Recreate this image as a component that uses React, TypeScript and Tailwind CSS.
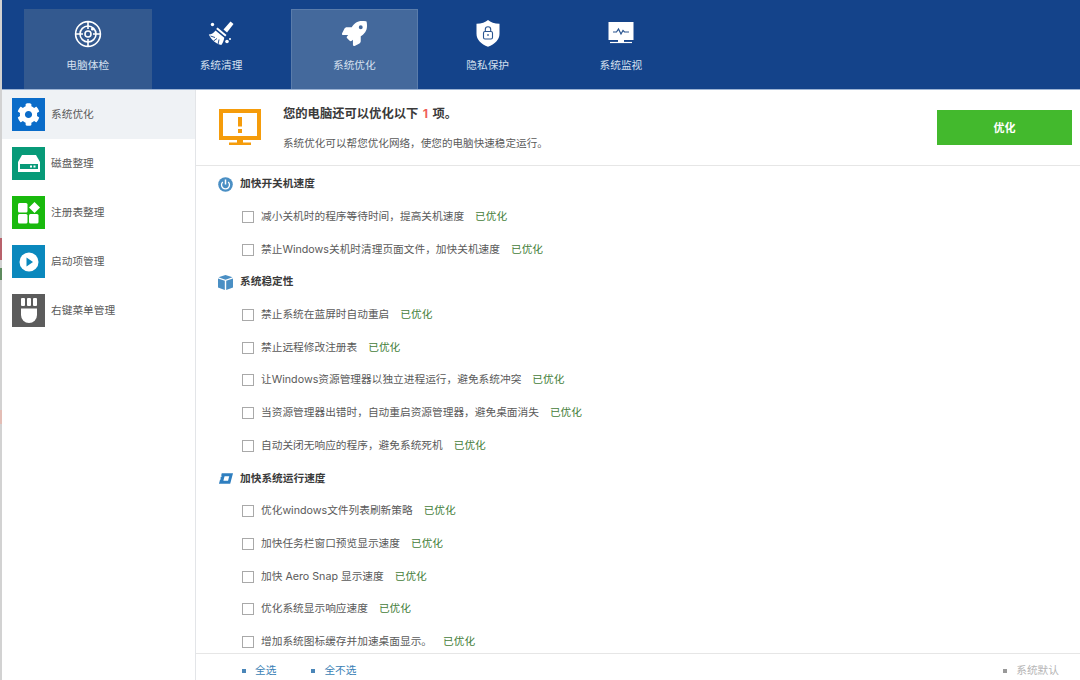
import { FaCog, FaRocket } from 'react-icons/fa'

const font = "font-['Inter','Noto_Sans_CJK_SC',sans-serif]"

function RadarIcon() {
  return (
    <svg width="28" height="28" viewBox="0 0 28 28" fill="none" stroke="#fff" strokeWidth="1.6">
      <circle cx="14" cy="14" r="12.4" />
      <circle cx="14" cy="14" r="8" />
      <circle cx="14" cy="14" r="3" />
      <path d="M14 2v7M14 19v7M2 14h7M19 14h7" />
      <circle cx="18.5" cy="9" r="1.6" fill="#fff" stroke="none" />
    </svg>
  )
}

function BroomIcon() {
  return (
    <svg width="26" height="26" viewBox="0 0 26 26">
      <path d="M15.500 8.500L22.500.5l3 2.500-6.500 8.500z" fill="#fff" />
      <path d="M9.500 6.500l9 7.500-1.300 1.600-9-7.500z" fill="#fff" />
      <path d="M7.500 9.500l8.800 7.300c-.5 3-1.500 5.300-3 7.200-2.500-.4-4.500-1.500-6.500-3-2-1.500-4-3.500-6-7.500 2.500 0 4.800-1.500 6.700-4z" fill="#fff" />
      <path d="M2.500 15l4.500 1.500M5.500 20l3.500-2.500M10 23.500l1-5" stroke="#14438a" strokeWidth="0.900" fill="none" />
      <circle cx="4.500" cy="3.500" r="1.700" fill="#fff" />
      <circle cx="19" cy="20.500" r="1.800" fill="#fff" />
      <circle cx="22" cy="18" r="1" fill="#fff" />
    </svg>
  )
}

function ShieldIcon() {
  return (
    <svg width="24" height="27" viewBox="0 0 24 27">
      <path d="M12 0c2.500 2.200 6.500 3.600 11.500 3.800v10c0 6-4.600 10.400-11.500 13C5.100 24.200.5 19.800.5 13.800v-10C5.500 3.600 9.500 2.200 12 0z" fill="#fff" />
      <rect x="7.500" y="11.500" width="9" height="7.500" rx="1.500" fill="none" stroke="#2a5590" strokeWidth="1.100" />
      <path d="M9.300 11.500V9.500a2.700 2.700 0 0 1 5.400 0v2" fill="none" stroke="#2a5590" strokeWidth="1.100" />
      <path d="M12 14v2" stroke="#2a5590" strokeWidth="1.200" />
    </svg>
  )
}

function MonitorIcon() {
  return (
    <svg width="26" height="23" viewBox="0 0 26 23">
      <rect x="0.500" y="0" width="25" height="18" fill="#fff" />
      <path d="M5 10h3.500l2-3 2.500 5 2-3.500 1.500 1.500H21" fill="none" stroke="#2a5590" strokeWidth="1.200" />
      <path d="M2 20.500h22" stroke="#fff" strokeWidth="1.200" />
      <rect x="10" y="18" width="6" height="2" fill="#fff" />
    </svg>
  )
}

function AlertMonitor() {
  return (
    <svg width="42" height="37" viewBox="0 0 42 37">
      <rect x="2" y="2" width="38" height="27" fill="#fff" stroke="#f59c0b" strokeWidth="4" />
      <rect x="19" y="8" width="4" height="9.500" fill="#f59c0b" />
      <rect x="19" y="20" width="4" height="4" fill="#f59c0b" />
      <rect x="18" y="30" width="6" height="4" fill="#f59c0b" />
      <rect x="10" y="33.500" width="22" height="2.500" fill="#f59c0b" />
    </svg>
  )
}

function DiskIcon() {
  return (
    <svg width="22" height="17" viewBox="0 0 22 17">
      <path d="M4 0h14l4 7v10H0V7z" fill="#fff" />
      <rect x="2" y="9" width="18" height="5" fill="#079a78" />
      <rect x="12" y="10.500" width="2" height="2" fill="#fff" />
      <rect x="15.500" y="10.500" width="2" height="2" fill="#fff" />
    </svg>
  )
}

function BlocksIcon() {
  return (
    <svg width="22" height="22" viewBox="0 0 22 22" fill="#fff">
      <rect x="0" y="1" width="9.500" height="9.500" rx="1.500" />
      <rect x="0" y="12" width="9.500" height="9.500" rx="1.500" />
      <rect x="11" y="12" width="9.500" height="9.500" rx="1.500" />
      <path d="M16.500 0l5.500 5.500-5.500 5.500-5.500-5.500z" />
    </svg>
  )
}

function PlayIcon() {
  return (
    <svg width="20" height="20" viewBox="0 0 20 20">
      <circle cx="10" cy="10" r="9.500" fill="#fff" />
      <path d="M7.500 5.500l6.500 4.500-6.500 4.500z" fill="#0a88bd" />
    </svg>
  )
}

function MouseIcon() {
  return (
    <svg width="16" height="25" viewBox="0 0 16 25" fill="#fff">
      <rect x="0" y="0" width="4" height="8" rx="1" />
      <rect x="6" y="0" width="4" height="8" rx="1" />
      <rect x="12" y="0" width="4" height="8" rx="1" />
      <path d="M0 10.500h16V17a8 8 0 0 1-16 0z" />
    </svg>
  )
}

function PowerIcon() {
  return (
    <svg width="15" height="15" viewBox="0 0 15 15">
      <circle cx="7.500" cy="7.500" r="7.300" fill="#4a8fc4" />
      <path d="M4.800 5a4 4 0 1 0 5.400 0" fill="none" stroke="#fff" strokeWidth="1.300" />
      <path d="M7.500 2.500v5" stroke="#fff" strokeWidth="1.500" />
    </svg>
  )
}

function BoxIcon() {
  return (
    <svg width="15" height="15" viewBox="0 0 15 15" fill="#4a8fc4">
      <path d="M7.500 0l7 2.300-7 2.400-7-2.400z" />
      <path d="M0 3.500l6.800 2.300V15L0 12.400z" />
      <path d="M15 3.500L8.200 5.800V15l6.800-2.600z" />
    </svg>
  )
}

function SpeedIcon() {
  return (
    <svg width="16" height="11" viewBox="0 0 16 11">
      <path d="M4 0h12l-3 11H1z" fill="#2f7fc0" />
      <path d="M7 3h5l-1.300 5h-5z" fill="#fff" />
      <path d="M0 3h4M0 6h3" stroke="#fff" strokeWidth="1" />
    </svg>
  )
}

const tabs = [
  { label: '电脑体检', icon: <RadarIcon />, cls: 'bg-[#33598f] border-transparent' },
  { label: '系统清理', icon: <BroomIcon />, cls: 'border-transparent' },
  { label: '系统优化', icon: <FaRocket size={25} color="#fff" />, cls: 'bg-[#44699c] border-[#5a7cab]' },
  { label: '隐私保护', icon: <ShieldIcon />, cls: 'border-transparent' },
  { label: '系统监视', icon: <MonitorIcon />, cls: 'border-transparent' },
]

const sideItems = [
  { label: '系统优化', bg: 'bg-[#0a6cc9]', icon: <FaCog size={23} color="#fff" />, active: true },
  { label: '磁盘整理', bg: 'bg-[#079a78]', icon: <DiskIcon /> },
  { label: '注册表整理', bg: 'bg-[#19b90d]', icon: <BlocksIcon /> },
  { label: '启动项管理', bg: 'bg-[#0a88bd]', icon: <PlayIcon /> },
  { label: '右键菜单管理', bg: 'bg-[#5c5c5c]', icon: <MouseIcon /> },
]

const groups = [
  {
    title: '加快开关机速度',
    icon: <PowerIcon />,
    items: ['减小关机时的程序等待时间，提高关机速度', '禁止Windows关机时清理页面文件，加快关机速度'],
  },
  {
    title: '系统稳定性',
    icon: <BoxIcon />,
    items: [
      '禁止系统在蓝屏时自动重启',
      '禁止远程修改注册表',
      '让Windows资源管理器以独立进程运行，避免系统冲突',
      '当资源管理器出错时，自动重启资源管理器，避免桌面消失',
      '自动关闭无响应的程序，避免系统死机',
    ],
  },
  {
    title: '加快系统运行速度',
    icon: <SpeedIcon />,
    items: [
      '优化windows文件列表刷新策略',
      '加快任务栏窗口预览显示速度',
      '加快 Aero Snap 显示速度',
      '优化系统显示响应速度',
      '增加系统图标缓存并加速桌面显示。',
    ],
  },
]

export default function App() {
  return (
    <div className={`${font} w-[1080px] h-[680px] overflow-hidden flex bg-white text-[10.7px] text-[#5a5a5a]`}>
      {/* sliver of the desktop behind the window */}
      <div className="w-[2px] shrink-0 flex flex-col bg-[#d2d2d2]">
        <div className="h-[238px] shrink-0" />
        <div className="h-[22px] shrink-0 bg-[#b8616b]" />
        <div className="h-[8px] shrink-0" />
        <div className="h-[12px] shrink-0 bg-[#5e8a5e]" />
        <div className="h-[130px] shrink-0" />
        <div className="h-[14px] shrink-0 bg-[#e3bdb5]" />
      </div>

      <div className="flex-1 min-w-0 flex flex-col">
        {/* Top nav */}
        <div className="h-[90px] shrink-0 bg-[#14438a] border-b border-[#9db4d4] flex items-end pl-[22px] gap-[5.8px]">
          {tabs.map((t) => (
            <div key={t.label} className={`w-[127.5px] h-[80px] border border-b-0 flex flex-col items-center text-[#d5e0ef] ${t.cls}`}>
              <div className="h-[29px] mt-[9px] flex items-center justify-center">{t.icon}</div>
              <div className="mt-[11px] leading-[14px]">{t.label}</div>
            </div>
          ))}
        </div>

        <div className="flex-1 flex min-h-0 bg-white">
          {/* Sidebar */}
          <div className="w-[194px] shrink-0 border-r border-[#e3e5e8] flex flex-col">
            {sideItems.map((s) => (
              <div key={s.label} className={`h-[49px] flex items-center pl-[10px] gap-[6px] ${s.active ? 'bg-[#eff2f5]' : ''}`}>
                <div className={`w-[33px] h-[33px] flex items-center justify-center ${s.bg}`}>{s.icon}</div>
                <span className="pt-[2px]">{s.label}</span>
              </div>
            ))}
          </div>

          {/* Main */}
          <div className="flex-1 flex flex-col min-w-0">
            <div className="h-[76px] shrink-0 border-b border-[#e6e6e6] flex items-center pl-[23px] pr-[8px]">
              <AlertMonitor />
              <div className="ml-[22px] flex-1 flex flex-col gap-[15px] mt-[2px]">
                <div className="text-[12.3px] leading-[16px] font-bold text-[#3a3a3a]">
                  您的电脑还可以优化以下 <span className="mx-[1.5px] text-[#f0605a]">1</span> 项。
                </div>
                <div className="text-[10.6px] leading-[14px]">系统优化可以帮您优化网络，使您的电脑快速稳定运行。</div>
              </div>
              <button className="w-[135px] h-[35px] -mt-[1px] pt-[2px] bg-[#43b92d] text-white font-bold text-[11px]">优化</button>
            </div>

            <div className="flex-1 min-h-0 overflow-hidden pt-[2px]">
              {groups.map((g) => (
                <div key={g.title}>
                  <div className="h-[32.7px] flex items-center pl-[22px]">
                    <div className="w-[15px] flex justify-center">{g.icon}</div>
                    <span className="ml-[7px] font-bold text-[#3a3a3a]">{g.title}</span>
                  </div>
                  {g.items.map((item) => (
                    <div key={item} className="h-[32.7px] flex items-center pl-[46px]">
                      <span className="w-[12px] h-[12px] border border-[#a9a9a9] bg-white" />
                      <span className="ml-[7px]">{item}</span>
                      <span className="ml-[11px] text-[#44803a]">已优化</span>
                    </div>
                  ))}
                </div>
              ))}
            </div>

            <div className="h-[27px] shrink-0 border-t border-[#e6e6e6] flex items-center pl-[46px] pr-[21px] pt-[8px] text-[#3a7fb5]">
              <span className="w-[4px] h-[4px] bg-[#4a86b8]" />
              <span className="ml-[9px]">全选</span>
              <span className="ml-[35px] w-[4px] h-[4px] bg-[#4a86b8]" />
              <span className="ml-[9px]">全不选</span>
              <span className="ml-auto w-[4px] h-[4px] bg-[#999]" />
              <span className="ml-[9px] text-[#b5b5b5]">系统默认</span>
            </div>
          </div>
        </div>
      </div>
    </div>
  )
}
